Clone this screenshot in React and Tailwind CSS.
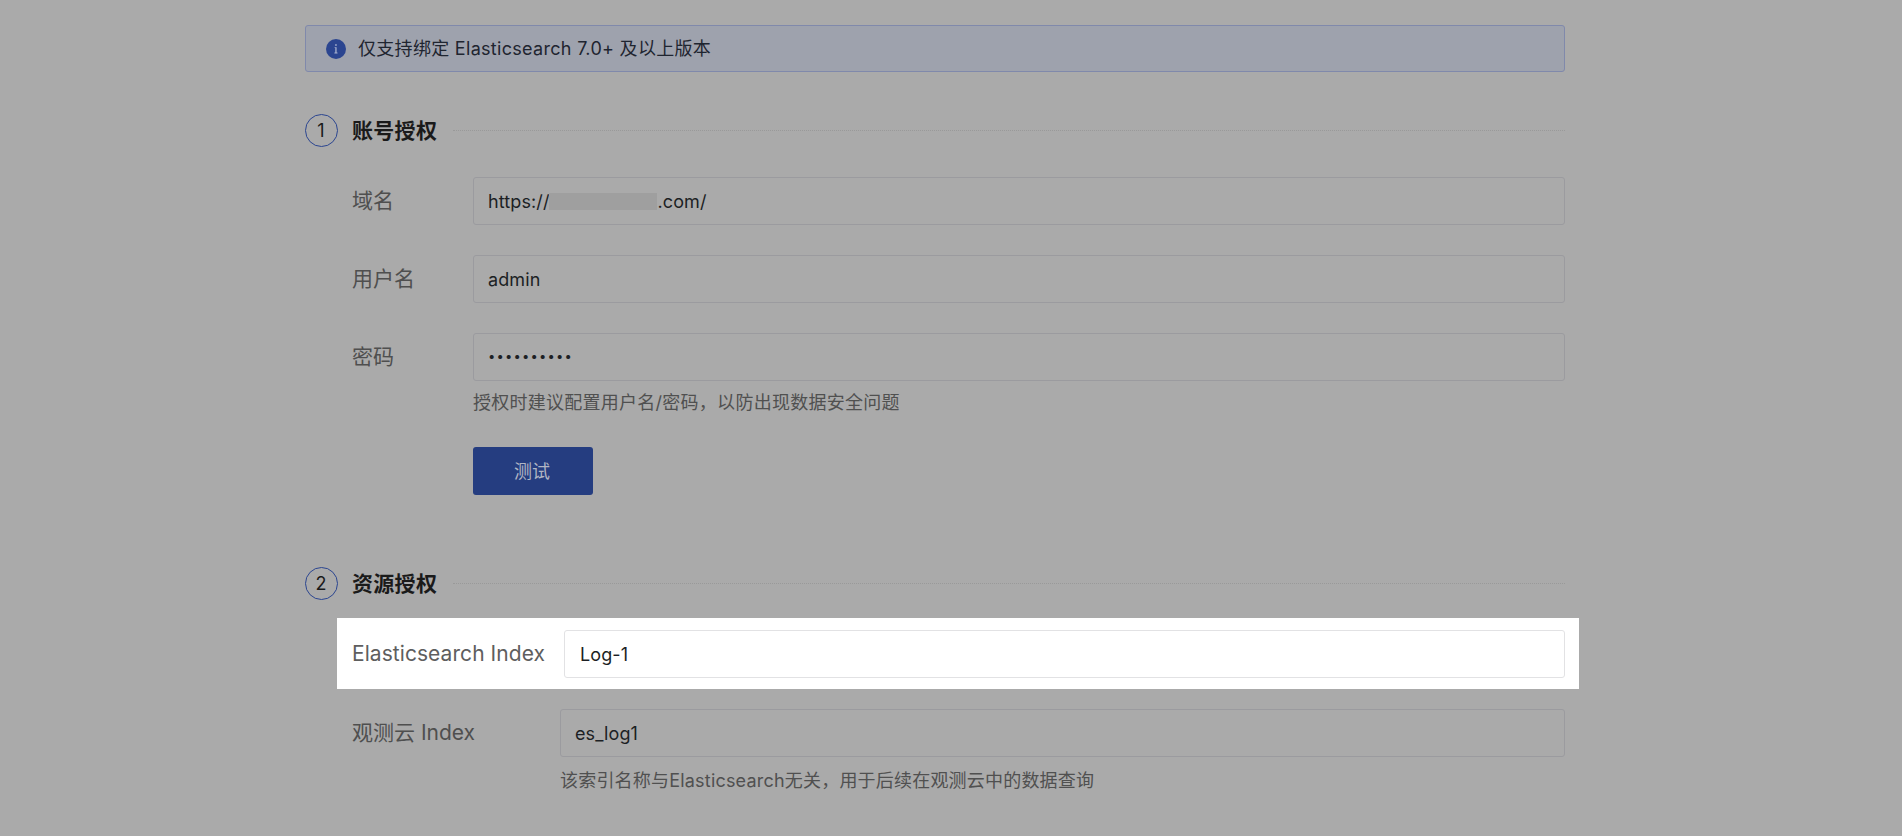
import React from "react";

function Field({ value, className = "px-[14px]" }) {
	return (<div className={`flex-1 h-12 flex items-center rounded-[3px] border text-[18px] text-[#1c1f24] tracking-[0.1px] ${className}`}>
		{value}
	</div>);
}

function Row({ label, labelWidth = "w-[121px]", value, className = "" }) {
	return (<div className={`flex items-start ${className}`}>
		<label className={`${labelWidth} h-12 flex items-center text-[21px] text-[#4f4f4f] whitespace-nowrap`}>{label}</label>
		<Field value={value} className="px-[14px] border-[#9b9b9f]" />
	</div>);
}

function SectionTitle({ num, title, className = "" }) {
	return (<div className={`flex items-center h-[33px] ${className}`}>
		<span className="w-[33px] h-[33px] pr-px flex items-center justify-center rounded-full border border-[#2b4590] text-[18px] text-[#1a1a1a]">{num}</span>
		<h2 className="ml-[14px] text-[21px] tracking-[0.3px] font-bold text-[#1a1a1a] whitespace-nowrap">{title}</h2>
		<div className="flex-1 ml-4 border-t border-dotted border-[#999999]"></div>
	</div>);
}

export default function App() {
	return (<div
		className="h-[836px] overflow-hidden bg-[#aaaaaa] pt-[25px] pl-[305px] w-full"
		style={{ fontFamily: 'Inter, "Noto Sans CJK SC", sans-serif' }}
	>
		<div className="w-[1260px]">
			<div className="h-[47px] flex items-center px-[20px] rounded-[3px] border border-[#8089ab] bg-[#9ea2ad] text-[18px] text-[#1f2530]">
				<svg width="20" height="20" viewBox="0 0 20 20" className="mr-[12px]">
					<circle cx="10" cy="10" r="10" fill="#2b4590" />
					<path d="M8.6 8.2h2v5.4h.9v.8H8.4v-.8h.9V9h-.7z" fill="#a9b2cf" />
					<rect x="9.2" y="5.2" width="1.5" height="1.6" fill="#a9b2cf" />
				</svg>
				<span className="tracking-[0.3px]">仅支持绑定 Elasticsearch 7.0+ 及以上版本</span>
			</div>

			<SectionTitle num="1" title="账号授权" className="mt-[42px]" />
			<div className="pl-[47px] mt-[30px] flex flex-col gap-[30px]">
				<Row label="域名" value={<>https://<span className="w-[108px] h-[17px] bg-[#9f9f9f]"></span>.com/</>} />
				<Row label="用户名" value="admin" />
				<Row label="密码" value={<span className="text-[13px] tracking-[1.2px]">••••••••••</span>} />
			</div>
			<p className="ml-[168px] mt-[8px] text-[18px] tracking-[0.26px] leading-[28px] text-[#505050]">授权时建议配置用户名/密码&#xFF0C;以防出现数据安全问题</p>
			<button className="block ml-[168px] mt-[30px] pr-0.5 w-[120px] h-12 rounded-[3px] bg-[#253d80] text-[18px] text-[#b1b5c4]">测试</button>

			<SectionTitle num="2" title="资源授权" className="mt-[72px]" />
			<div className="flex items-start -mr-[14px] ml-8 mt-[18px] h-[71px] py-3 pl-[15px] pr-[14px] bg-white">
				<label className="w-[212px] h-12 flex items-center text-[21px] tracking-[0.06px] text-[#5e5e5e] whitespace-nowrap">Elasticsearch Index</label>
				<Field value="Log-1" className="px-[15px] border-[#e2e2e4]" />
			</div>
			<Row label="观测云 Index" labelWidth="w-[208px]" value="es_log1" className="ml-[47px] mt-5" />
			<p className="ml-[255px] mt-[10px] text-[18px] tracking-[0.2px] leading-[28px] text-[#505050]">该索引名称与Elasticsearch无关&#xFF0C;用于后续在观测云中的数据查询</p>
		</div>
	</div>);
}
